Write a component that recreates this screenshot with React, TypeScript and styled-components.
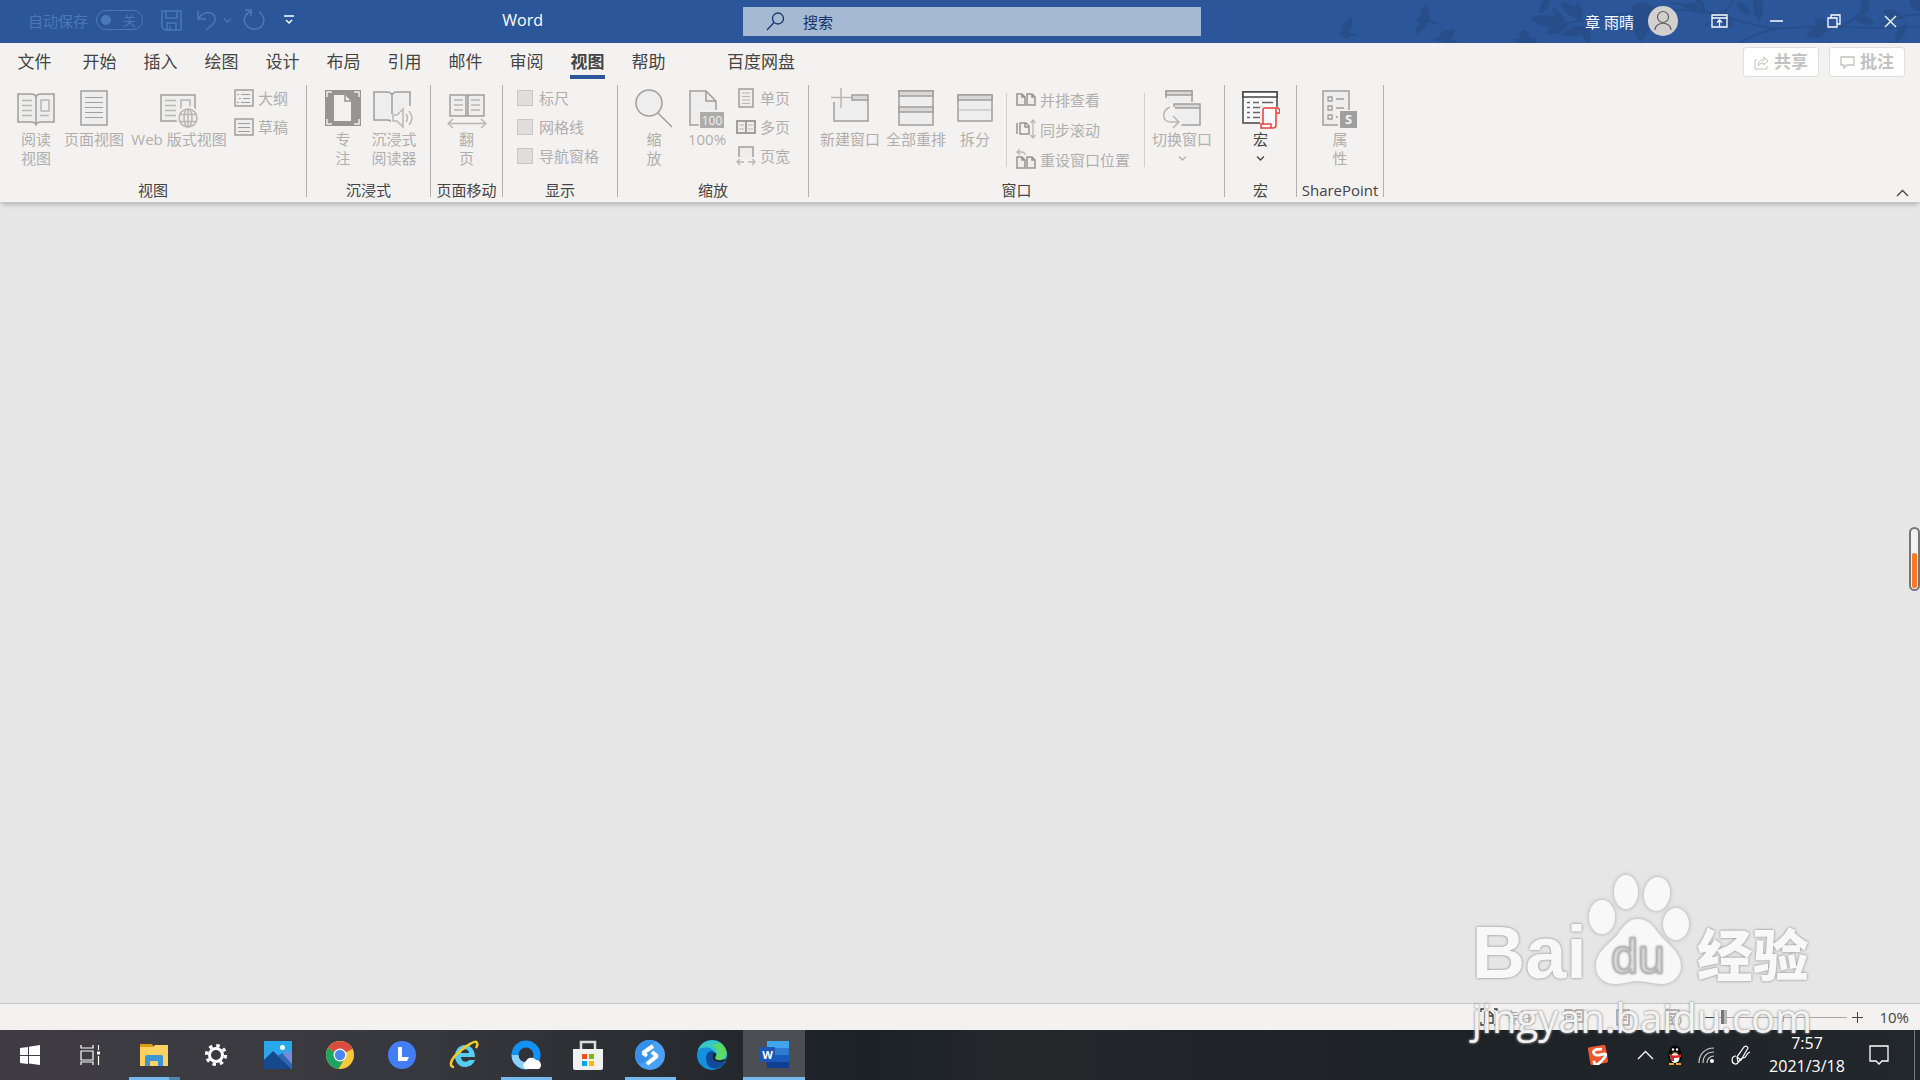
import React from "react";
import styled, { createGlobalStyle } from "styled-components";

const GlobalStyle = createGlobalStyle`
  * { box-sizing: border-box; }
  body { margin: 0; font-family: "Open Sans", "Noto Sans CJK SC", sans-serif; }
  button, input { font: inherit; color: inherit; }
  button { border: 0; padding: 0; background: none; }
`;

const ink = "#444444";
const faded = "#b1aeac";
const brand = "#2b579a";

const Screen = styled.div`
  position: relative;
  min-height: 100vh;
  display: flex;
  flex-direction: column;
  background: #e6e6e6;
  color: ${ink};
  font-size: 15px;
  overflow: hidden;
`;

/* ---------- title bar ---------- */
const TitleBar = styled.header`
  position: relative;
  display: grid;
  grid-template-columns: 743fr 458px 719fr;
  align-items: center;
  height: 43px;
  background: ${brand};
  color: #fff;
`;
const Art = styled.svg`
  position: absolute;
  right: 0;
  top: 0;
`;
const QuickAccess = styled.div`
  display: flex;
  align-items: center;
  align-self: start;
  padding-left: 28px;
  height: 40px;
  color: #4a79b8;
`;
const AutoSave = styled.label`
  display: flex;
  align-items: center;
  gap: 8px;
  margin-right: 18px;
`;
const Toggle = styled.button`
  display: flex;
  align-items: center;
  justify-content: space-between;
  width: 47px;
  height: 20px;
  padding: 0 6px 0 4px;
  border: 1px solid #4a79b8;
  border-radius: 10px;
  font-size: 13px;
  line-height: 16px;
  &::before {
    content: "";
    width: 10px;
    height: 10px;
    border-radius: 50%;
    background: #4a79b8;
  }
`;
const QuickButton = styled.button<{ $gap: number; $bright?: boolean }>`
  display: flex;
  margin-right: ${(p) => p.$gap}px;
  color: ${(p) => (p.$bright ? "#fff" : "inherit")};
`;
const DocTitle = styled.h1`
  margin: 0 200px 0 auto;
  font-size: 16px;
  line-height: 24px;
  font-weight: 400;
  color: #fff;
`;
const Search = styled.label`
  display: flex;
  align-items: center;
  gap: 18px;
  height: 29px;
  padding-left: 23px;
  background: #a6b9d2;
  color: #14356e;
`;
const SearchBox = styled.input`
  flex: 1;
  min-width: 0;
  border: 0;
  padding: 0;
  background: none;
  outline: 0;
  &::placeholder { color: #14356e; opacity: 1; }
`;
const WindowSide = styled.div`
  position: relative;
  display: flex;
  justify-content: flex-end;
  align-items: center;
  align-self: start;
  padding-right: 1px;
`;
const Account = styled.button`
  display: flex;
  align-items: center;
  gap: 14px;
  margin-right: 13px;
`;
const WindowButton = styled.button`
  display: flex;
  justify-content: center;
  align-items: center;
  width: 57px;
  height: 42px;
`;

/* ---------- tabs ---------- */
const TabRow = styled.nav`
  display: flex;
  align-items: flex-start;
  height: 38px;
  padding: 4px 15px 0 17px;
  background: #f3f2f1;
`;
const Tab = styled.button<{ $active?: boolean; $after?: number }>`
  height: 32px;
  margin-right: ${(p) => p.$after ?? 26}px;
  border-bottom: 4px solid ${(p) => (p.$active ? brand : "transparent")};
  font-size: 17px;
  line-height: 30px;
  font-weight: ${(p) => (p.$active ? 700 : 400)};
  width: ${(p) => (p.$after === 0 ? "auto" : "35px")};
  white-space: nowrap;
`;
const TabActions = styled.div`
  display: flex;
  gap: 10px;
  margin-left: auto;
`;
const ActionButton = styled.button`
  display: flex;
  align-items: center;
  justify-content: center;
  gap: 5px;
  width: 76px;
  height: 30px;
  border: 1px solid #e1dfdd;
  border-radius: 3px;
  background: #fff;
  color: #c4c2c0;
  font-size: 17px;
  line-height: 28px;
  font-weight: 700;
`;

/* ---------- ribbon ---------- */
const Ribbon = styled.section`
  position: relative;
  display: flex;
  padding: 4px 0 5px;
  background: #f3f2f1;
  border-bottom: 1px solid #c8c6c4;
  box-shadow: 0 4px 4px -2px rgba(0, 0, 0, 0.2);
`;
const GroupBox = styled.section`
  display: flex;
  flex-direction: column;
  border-right: 1px solid #b3b0ad;
`;
const GroupBody = styled.div<{ $left: number; $right: number }>`
  display: flex;
  align-items: flex-start;
  height: 96px;
  padding: 0 ${(p) => p.$right}px 0 ${(p) => p.$left}px;
`;
const GroupName = styled.h2`
  margin: 0;
  height: 16px;
  font-size: 15px;
  line-height: 18px;
  font-weight: 400;
  text-align: center;
`;
const BigButton = styled.button<{ $w: number; $on?: boolean }>`
  display: flex;
  flex-direction: column;
  align-items: center;
  width: ${(p) => p.$w}px;
  color: ${(p) => (p.$on ? ink : faded)};
  line-height: 19px;
  white-space: nowrap;
`;
const SmallColumn = styled.div<{ $before?: number; $top?: number }>`
  display: flex;
  flex-direction: column;
  margin-top: -2px;
  margin-left: ${(p) => p.$before ?? 0}px;
  padding-top: ${(p) => p.$top ?? 0}px;
`;
const SmallButton = styled.button<{ $h?: number }>`
  display: flex;
  align-items: center;
  gap: 4px;
  height: ${(p) => p.$h ?? 29}px;
  color: ${faded};
  white-space: nowrap;
`;
const CheckRow = styled.label`
  display: flex;
  align-items: center;
  gap: 6px;
  height: 29px;
  color: ${faded};
`;
const Check = styled.input`
  appearance: none;
  width: 16px;
  height: 16px;
  margin: 0;
  border: 1px solid #c8c6c4;
  background: #e1dfdd;
`;
const InnerLine = styled.div<{ $before: number; $after: number }>`
  width: 1px;
  height: 74px;
  margin: 8px ${(p) => p.$after}px 0 ${(p) => p.$before}px;
  background: #d2d0ce;
`;
const Collapse = styled.button`
  display: flex;
  align-self: flex-end;
  margin: 0 11px 0 auto;
`;

const Canvas = styled.main`
  flex: 1;
  display: flex;
  align-items: center;
  justify-content: flex-end;
  padding-bottom: 88px;
`;
const Meter = styled.div`
  display: flex;
  align-items: flex-end;
  width: 11px;
  height: 64px;
  padding: 1px;
  border: 2px solid #767676;
  border-radius: 6px;
  background: #f2f2f2;
`;
const MeterFill = styled.div`
  width: 100%;
  height: 60%;
  border-radius: 2px;
  background: #ff7a22;
`;

/* ---------- status bar ---------- */
const StatusBar = styled.footer`
  display: flex;
  align-items: center;
  justify-content: flex-end;
  height: 27px;
  padding-right: 11px;
  border-top: 1px solid #c6c6c6;
  background: #f3f2f1;
`;
const StatusButton = styled.button<{ $gap: number }>`
  display: flex;
  align-items: center;
  gap: 6px;
  margin-right: ${(p) => p.$gap}px;
  color: #a8a6a4;
  line-height: 20px;
`;
const ZoomSlider = styled.input`
  appearance: none;
  width: 128px;
  height: 16px;
  margin: 0 5px 0 3px;
  background: linear-gradient(#a6a6a6, #a6a6a6) center / 100% 1px no-repeat,
    linear-gradient(#a6a6a6, #a6a6a6) center / 1px 9px no-repeat;
  &::-webkit-slider-thumb {
    appearance: none;
    width: 6px;
    height: 14px;
    background: linear-gradient(90deg, #777 50%, #b5b5b5 50%);
  }
`;
const Percent = styled.output`
  margin-left: 16px;
  line-height: 20px;
`;

/* ---------- task bar ---------- */
const TaskBar = styled.footer`
  display: flex;
  height: 50px;
  background: linear-gradient(90deg, #3f3d43 0%, #37383d 22%, #272b2f 36%, #1b2127 45%, #24282b 52%, #1d2226 75%, #22272b 100%);
  color: #fff;
`;
const TaskButton = styled.button<{ $w?: number; $active?: boolean; $running?: boolean; $stack?: boolean }>`
  position: relative;
  display: flex;
  align-items: center;
  justify-content: center;
  width: ${(p) => p.$w ?? 62}px;
  background: ${(p) => (p.$active ? "#4b4f53" : "none")};
  &::after {
    content: "";
    display: ${(p) => (p.$running || p.$active ? "block" : "none")};
    position: absolute;
    bottom: 0;
    left: ${(p) => (p.$active ? 0 : 6)}px;
    right: ${(p) => (p.$active ? 0 : 5)}px;
    height: 3px;
    background: ${(p) => (p.$stack ? "linear-gradient(90deg, #76b9ed 78%, #5285ae 78%)" : "#76b9ed")};
  }
`;
const Spacer = styled.div<{ $w: number }>`
  width: ${(p) => p.$w}px;
`;
const Tray = styled.div`
  display: flex;
  align-items: center;
  margin-left: auto;
`;
const TrayButton = styled.button<{ $w: number }>`
  display: flex;
  justify-content: center;
  width: ${(p) => p.$w}px;
`;
const Clock = styled.time`
  width: 96px;
  font-size: 16px;
  line-height: 23px;
  text-align: center;
`;
const Desktop = styled.button`
  align-self: stretch;
  width: 6px;
  border-left: 1px solid #777a7c;
`;

/* ---------- watermark ---------- */
const Mark = styled.div`
  position: absolute;
  right: 108px;
  bottom: 34px;
  color: #f8f8f8;
  text-shadow: 0 0 3px #999, 0 0 2px #aaa;
  pointer-events: none;
`;
const MarkRow = styled.div`
  display: flex;
  align-items: flex-end;
  font-family: "Liberation Sans", "Noto Sans CJK SC", sans-serif;
  font-weight: 700;
  font-size: 74px;
  line-height: 74px;
`;
const MarkPaw = styled.svg`
  margin: 0 6px 5px 0;
  filter: drop-shadow(0 0 2px #aaa);
`;
const MarkHan = styled.span`
  font-family: "Noto Sans CJK SC", sans-serif;
  font-weight: 900;
  font-size: 56px;
  line-height: 76px;
`;
const MarkUrl = styled.div`
  font-size: 40px;
  line-height: 56px;
  color: rgba(255, 255, 255, 0.9);
  white-space: nowrap;
`;

/* ---------- drawings ---------- */
type Kids = { w: number; h?: number; children: React.ReactNode };
const Pic = ({ w, h = 45, children }: Kids) => (
  <svg width={w} height={h} viewBox={`0 0 ${w} ${h}`} fill="none" aria-hidden="true">
    {children}
  </svg>
);
const dark = "#a19f9d";
const lite = "#b9b7b5";
const paper = "#eeeeee";

const Chevron = () => (
  <Pic w={9} h={19}><path d="M1 7.5l3.5 3.5L8 7.5" stroke="currentColor" strokeWidth="1.3" /></Pic>
);
const ReadIcon = () => (
  <Pic w={38}>
    <path d="M1 9h13q4 0 5 2.500q1-2.500 5-2.500h13v28H24q-4 0-5 2.500q-1-2.500-5-2.500H1z" fill={paper} stroke={dark} strokeWidth="1.500" />
    <path d="M19 11v27" stroke={dark} strokeWidth="1.500" />
    <path d="M5 15.500h10M5 20.500h10M5 25.500h10M5 30.500h10M23 30.500h9" stroke={lite} strokeWidth="1.500" />
    <path d="M24 15h8v11h-8z" stroke={lite} strokeWidth="1.500" />
  </Pic>
);
const PageIcon = () => (
  <Pic w={28}>
    <path d="M1 6h26v34H1z" fill={paper} stroke={dark} strokeWidth="1.500" />
    <path d="M5 12.500h18M5 17.500h18M5 22.500h18M5 27.500h18M5 32.500h18" stroke={dark} />
  </Pic>
);
const Globe = () => (
  <g stroke={lite} strokeWidth="1.500">
    <circle cx="28" cy="33" r="11" fill="#f3f2f1" stroke="#f3f2f1" />
    <circle cx="28" cy="33" r="9" fill={paper} />
    <ellipse cx="28" cy="33" rx="4" ry="9" />
    <path d="M20 29.500h16M20 36.500h16M28 24v18" />
  </g>
);
const WebIcon = () => (
  <Pic w={38}>
    <path d="M1 10h34v26H1z" fill={paper} stroke={dark} strokeWidth="1.500" />
    <path d="M5 15.500h11M5 20.500h11M5 25.500h11M5 30.500h11M21 31V15h9v16" stroke={lite} strokeWidth="1.500" />
    <Globe />
  </Pic>
);
const OutlineIcon = ({ plain }: { plain?: boolean }) => (
  <Pic w={20} h={18}>
    <path d="M1 1h18v16H1z" fill={paper} stroke={dark} strokeWidth="1.500" />
    <path d={plain ? "M4 5.500h12M4 9.500h12M4 13.500h12" : "M3 5.500h2M7 5.500h9M5 9.500h2M9 9.500h7M3 13.500h2M7 13.500h9"} stroke={dark} />
  </Pic>
);
const FocusIcon = () => (
  <Pic w={36}>
    <path d="M0 5h36v36H0z" fill="#979593" />
    <path d="M2 12V7h5M29 7h5v5M34 34v5h-5M7 39H2v-5" stroke="#eee" strokeWidth="1.500" />
    <path d="M9 10h11l6 6v20H9z" fill="#f3f2f1" />
    <path d="M20 10v6h6" stroke="#979593" strokeWidth="1.500" />
  </Pic>
);
const ImmersiveIcon = () => (
  <Pic w={42}>
    <path d="M19 10q-1-3-5-3H1v28h13q4 0 5 2.500" fill={paper} stroke={dark} strokeWidth="1.500" />
    <path d="M19 10q1-3 5-3h13v28H24q-4 0-5 2.500z" fill={paper} />
    <path d="M19 36V10q1-3 5-3h13v17" stroke={dark} strokeWidth="1.500" />
    <path d="M18 29h5l8-8h11v24H29l-6-5h-5z" fill="#f3f2f1" />
    <path d="M20 30h4l6-6v18l-6-6h-4zM33 29q3 4 0 8M36 26q6 7 0 14" stroke={lite} strokeWidth="1.500" />
  </Pic>
);
const FlipIcon = () => (
  <Pic w={40}>
    <path d="M3 10h34v21H3zM19 10v21M21 10v21" fill={paper} stroke={dark} strokeWidth="1.500" />
    <path d="M7 15h9M7 20h9M7 25h9M24 15h9M24 20h9M24 25h9M1 38.500h38M6 34l-5 4.500L6 43M34 34l5 4.500L34 43" stroke={lite} strokeWidth="1.500" />
  </Pic>
);
const ZoomIcon = () => (
  <Pic w={38}>
    <circle cx="14" cy="18" r="13" fill={paper} stroke={dark} strokeWidth="1.500" />
    <path d="M23 28l14 14" stroke={dark} strokeWidth="1.500" />
  </Pic>
);
const HundredIcon = () => (
  <Pic w={36}>
    <path d="M1 6h16l10 10v24H1z" fill={paper} stroke={dark} strokeWidth="1.500" />
    <path d="M17 6v10h10" stroke={dark} strokeWidth="1.500" />
    <path d="M10 25h26v20H10z" fill="#f3f2f1" />
    <path d="M11 27h24v16H11z" fill="#aeacaa" />
    <text x="23" y="40" textAnchor="middle" fontSize="12" fill="#f3f2f1">100</text>
  </Pic>
);
const OnePageIcon = () => (
  <Pic w={20} h={20}>
    <path d="M3 1h14v18H3z" fill={paper} stroke={dark} strokeWidth="1.500" />
    <path d="M6 5h8M6 8.500h8M6 12h8M6 15.500h8" stroke={lite} />
  </Pic>
);
const ManyPagesIcon = () => (
  <Pic w={20} h={16}>
    <path d="M1 2h18v12H1zM10 2v12" fill={paper} stroke={dark} strokeWidth="2" />
    <path d="M3 6h5M3 10h5M12 6h5M12 10h5" stroke={lite} />
  </Pic>
);
const PageWidthIcon = () => (
  <Pic w={20} h={20}>
    <path d="M3 11V1h14v10" fill={paper} stroke={dark} strokeWidth="1.500" />
    <path d="M1 16h7M12 16h7M4 13l-3 3 3 3M16 13l3 3-3 3" stroke={lite} strokeWidth="1.300" />
  </Pic>
);
const NewWindowIcon = () => (
  <Pic w={38}>
    <path d="M3 15h34v21H3z" fill={paper} />
    <path d="M21 10h16v5H21z" fill="#dad8d6" stroke={dark} strokeWidth="1.500" />
    <path d="M3 17v19h34V15" stroke={dark} strokeWidth="1.500" />
    <path d="M0 12.500h20M10 3v20" stroke={lite} strokeWidth="1.500" />
  </Pic>
);
const ArrangeIcon = () => (
  <Pic w={36}>
    <path d="M1 6h34v34H1z" fill={paper} stroke={dark} strokeWidth="1.500" />
    <path d="M1 6h34v5H1zM1 22h34v5H1z" fill="#dad8d6" stroke={dark} strokeWidth="1.500" />
  </Pic>
);
const SplitIcon = () => (
  <Pic w={36}>
    <path d="M1 10h34v26H1z" fill={paper} stroke={dark} strokeWidth="1.500" />
    <path d="M1 10h34v5H1z" fill="#dad8d6" stroke={dark} strokeWidth="1.500" />
    <path d="M1 25h34" stroke={lite} />
  </Pic>
);
const twoSheets = "M1 1h5l3 3v8H1zM6 1v3h3M11 1h5l3 3v8h-8zM16 1v3h3";
const SideIcon = () => (
  <Pic w={20} h={13}><path d={twoSheets} fill={paper} stroke="#979593" strokeWidth="1.500" /></Pic>
);
const SyncIcon = () => (
  <Pic w={20} h={20}>
    <path d="M1 4v11M4 4h6l3 3v8H4zM9 4v4h4" stroke="#979593" strokeWidth="1.500" />
    <path d="M17 1v18M14.500 4L17 1l2.500 3M14.500 16l2.500 3 2.500-3" stroke={lite} strokeWidth="1.300" />
  </Pic>
);
const ResetIcon = () => (
  <Pic w={20} h={20}>
    <g transform="translate(0 7)"><path d={twoSheets} fill={paper} stroke="#979593" strokeWidth="1.500" /></g>
    <path d="M9 6q0-3-4-3H1M4 0L1 3l3 3" stroke={lite} strokeWidth="1.300" />
  </Pic>
);
const SwitchIcon = () => (
  <Pic w={38}>
    <path d="M3 6h26v14H3z" fill={paper} />
    <path d="M3 13V6h26v11" stroke={dark} strokeWidth="1.500" />
    <path d="M3 6h26v4H3z" fill="#dad8d6" stroke={dark} strokeWidth="1.500" />
    <path d="M9 17h29v24H9z" fill="#f3f2f1" />
    <path d="M11 24h26v16H11z" fill={paper} />
    <path d="M11 19h26v4H11z" fill="#dad8d6" stroke={dark} strokeWidth="1.500" />
    <path d="M37 23v17H18" stroke={dark} strokeWidth="1.500" />
    <path d="M5 22h7v12h7v6H8z" fill="#f3f2f1" />
    <path d="M7 22C-2 26-1 37 8 37h7M10 31l6 6-6 6" stroke={lite} strokeWidth="1.500" />
  </Pic>
);
const MacroIcon = () => (
  <Pic w={38}>
    <path d="M1 7h34v31H1z" fill="#fafafa" stroke="#444" strokeWidth="1.500" />
    <path d="M1 7h34v5H1z" fill="#fff" stroke="#444" strokeWidth="1.500" />
    <path d="M5 17.500h3M11 17.500h6M20 17.500h11M5 22.500h3M11 22.500h10M5 27.500h3M11 27.500h8M5 32.500h3M11 32.500h8" stroke="#666" strokeWidth="1.300" />
    <path d="M18 37V22h20v22H18z" fill="#f3f2f1" />
    <path d="M21 39V25q0-2 2-2h12q3 0 3 5h-4v12q0 3-3 3H19v-4h10v4M34 28v-5" fill="#fafafa" stroke="#e8403c" strokeWidth="1.500" />
  </Pic>
);
const PropertiesIcon = () => (
  <Pic w={36}>
    <path d="M1 6h26v34H1z" fill={paper} stroke={dark} strokeWidth="1.500" />
    <path d="M6 12h4v4H6zM6 21h4v4H6zM6 30h4v4H6zM14 14h8M14 23h8M14 32h3" stroke={dark} strokeWidth="1.300" />
    <path d="M16 25h20v19H16z" fill="#f3f2f1" />
    <path d="M18 26h17v17H18z" fill="#a19f9d" />
    <text x="26.500" y="39" textAnchor="middle" fontSize="13" fontWeight="700" fill="#f3f2f1">S</text>
  </Pic>
);

const TitleArt = () => (
  <Art width="600" height="43" viewBox="0 0 600 43" fill="#274e88" aria-hidden="true">
    <path d="M32 17q-11 6-11 15l-5 1 6 2q0 4 6 4l2-3h7l-1-2-7-1q5-9 3-16z" />
    <path d="M105 4q-6 8-5 14l-6 1 5 5q-5 6-4 10 9-1 13-12l8 3 4-3-10-2q1-10-5-16z" />
    <path d="M135 29q-13 0-16 8l-6 3q12 3 26 3l-3-3-6-1q5-4 5-10zM203 30q-6 3-3 8l-6 1 3 4h20v-5l-8-1q1-6-6-7z" />
    <g stroke="#274e88" fill="none" strokeWidth="2">
      <path d="M240 24c40-6 70-14 120-14s70 22 110 18 70 2 130-1M230 0l-7 8M385 26q20-10 28-26M350 3q40 2 50 22M470 28q-28 0-50 15M520 27q20-10 30-27M560 25q20-10 40-11" />
    </g>
    <path d="M210 18q18-8 35 6-22 8-35-6zM232 7q12 6 14 19-14-6-14-19zM257 1q10 12 2 20-9-7-2-20zM225 34q10-12 24-10-8 12-24 10zM240 35q14-14 32-6-13 11-32 6zM267 29q8 8 0 15-8-9 0-15zM224 0q-6 6-4 14 11-5 9-14zM240 3q15-2 21 16-14-1-21-16z" />
    <path d="M312 6q12-8 24 2 0 14-15 34-12-14-9-36zM362 5q12-6 23 6-13 4-23-6zM376 0q-2 10 7 14 5-8-2-14zM400 10q14 2 12 19-13-6-12-19zM417 1q14 4 12 14-12-2-12-14zM434 0q-4 10 5 22 6-8 3-22zM495 19q12-4 12 10-12 0-12-10zM486 36q7-13 22-8-4 14-22 8zM533 18q12-8 22 6-12 4-22-6zM548 0q4 12-5 15-5-8 0-15zM562 11q14-6 22 8-14 2-22-8zM575 43q-2-14 12-20 0 15-12 20zM590 0q-2 8 10 12V0z" />
  </Art>
);

const Du = () => (
  <MarkPaw width="104" height="112" viewBox="0 0 104 112" fill="#f8f8f8">
    <ellipse cx="15" cy="44" rx="13" ry="17" />
    <ellipse cx="39" cy="19" rx="12" ry="17" />
    <ellipse cx="70" cy="21" rx="13" ry="17" transform="rotate(8 70 21)" />
    <ellipse cx="89" cy="51" rx="13" ry="16" />
    <path d="M51 46c-10 0-15 8-20 15-7 9-22 17-22 32 0 12 9 18 20 18 8 0 14-3 22-3s15 3 23 3c12 0 20-8 20-18 0-14-14-22-22-32-6-8-11-15-21-15z" />
    <text x="51" y="100" textAnchor="middle" fontSize="48" fontWeight="400" fontFamily="Liberation Sans" fill="#ececec" stroke="#b8b8b8" strokeWidth="1">du</text>
  </MarkPaw>
);

const WordGlyph = () => (
  <Pic w={30} h={30}>
    <path d="M8 1h22v7H8z" fill="#41a5ee" /><path d="M8 8h22v7H8z" fill="#2b7cd3" />
    <path d="M8 15h22v7H8z" fill="#185abd" /><path d="M8 22h22v6H8z" fill="#103f91" />
    <rect x="1" y="7" width="15" height="15" rx="1" fill="#1b55b5" />
    <text x="8.500" y="19" textAnchor="middle" fontSize="11" fontWeight="700" fill="#fff">W</text>
  </Pic>
);

const Group = ({ name, left = 0, right = 0, children }: { name: string; left?: number; right?: number; children: React.ReactNode }) => (
  <GroupBox aria-label={name}>
    <GroupBody $left={left} $right={right}>{children}</GroupBody>
    <GroupName>{name}</GroupName>
  </GroupBox>
);
const Big = ({ w, icon, lines, on, menu }: { w: number; icon: React.ReactNode; lines: string[]; on?: boolean; menu?: boolean }) => (
  <BigButton $w={w} $on={on} disabled={!on}>
    {icon}
    {lines.map((l) => <span key={l}>{l}</span>)}
    {menu && <Chevron />}
  </BigButton>
);
const Small = ({ icon, text, h }: { icon: React.ReactNode; text: string; h?: number }) => (
  <SmallButton $h={h} disabled>{icon}<span>{text}</span></SmallButton>
);

const tabs = ["文件", "开始", "插入", "绘图", "设计", "布局", "引用", "邮件", "审阅", "视图", "帮助"];

export default function App() {
  return (
    <Screen>
      <GlobalStyle />
      <TitleBar>
        <TitleArt />
        <QuickAccess>
          <AutoSave>自动保存<Toggle role="switch" aria-checked="false" disabled>关</Toggle></AutoSave>
          <QuickButton $gap={15} disabled aria-label="保存">
            <Pic w={21} h={21}><path d="M1 1h19v19H4l-3-3zM5 1v7h11V1M6 20v-7h9v7M9 20v-4" stroke="currentColor" strokeWidth="1.500" /></Pic>
          </QuickButton>
          <QuickButton $gap={6} disabled aria-label="撤消">
            <Pic w={20} h={21}><path d="M1 1v8h8M1 9C6 2 12 1 16 4c4 4 2 8-1 11l-6 5" stroke="currentColor" strokeWidth="1.500" /></Pic>
          </QuickButton>
          <QuickButton $gap={11} disabled aria-label="撤消选项"><Chevron /></QuickButton>
          <QuickButton $gap={19} disabled aria-label="重复">
            <Pic w={22} h={22}><path d="M2 1h6v6M8 2C2 5 0 10 2 14c3 7 14 9 18 1 2-5 0-10-4-12" stroke="currentColor" strokeWidth="1.500" /></Pic>
          </QuickButton>
          <QuickButton $gap={0} $bright aria-label="自定义快速访问工具栏">
            <Pic w={10} h={10}><path d="M0 1h10M2 5l3 3 3-3" stroke="currentColor" strokeWidth="1.500" /></Pic>
          </QuickButton>
          <DocTitle>Word</DocTitle>
        </QuickAccess>
        <Search>
          <Pic w={19} h={19}><circle cx="12" cy="6.500" r="5.500" stroke="currentColor" strokeWidth="1.300" /><path d="M8 10.500l-7 7.500" stroke="currentColor" strokeWidth="1.300" /></Pic>
          <SearchBox placeholder="搜索" aria-label="搜索" />
        </Search>
        <WindowSide>
          <Account>
            章 雨晴
            <Pic w={30} h={30}>
              <circle cx="15" cy="15" r="15" fill="#d2d0ce" />
              <circle cx="15" cy="11" r="5.500" stroke="#605e5c" strokeWidth="1.200" />
              <path d="M7 24c0-9 16-9 16 0" stroke="#605e5c" strokeWidth="1.200" />
            </Pic>
          </Account>
          <WindowButton aria-label="功能区显示选项"><Pic w={17} h={14}><path d="M1 1h15v12H1zM1 4h15M8.500 12V6M6 8.500L8.500 6 11 8.500" stroke="#fff" strokeWidth="1.300" /></Pic></WindowButton>
          <WindowButton aria-label="最小化"><Pic w={13} h={2}><path d="M0 1h13" stroke="#fff" strokeWidth="1.500" /></Pic></WindowButton>
          <WindowButton aria-label="还原"><Pic w={14} h={14}><path d="M1 4h9v9H1zM4 4V1h9v9h-3" stroke="#fff" strokeWidth="1.300" /></Pic></WindowButton>
          <WindowButton aria-label="关闭"><Pic w={13} h={13}><path d="M1 1l11 11M12 1L1 12" stroke="#fff" strokeWidth="1.300" /></Pic></WindowButton>
        </WindowSide>
      </TitleBar>

      <TabRow>
        {tabs.map((t, i) => <Tab key={t} $active={t === "视图"} $after={i === 0 ? 30 : i === 10 ? 61 : 26}>{t}</Tab>)}
        <Tab $after={0}>百度网盘</Tab>
        <TabActions>
          <ActionButton disabled>
            <Pic w={15} h={15}><path d="M3 5H1v9h12v-3M4 11c0-5 3-6 6-6V2l4 4-4 4V8C7 8 5 9 4 11z" stroke="currentColor" /></Pic>共享
          </ActionButton>
          <ActionButton disabled>
            <Pic w={15} h={15}><path d="M1 2h13v8H7l-3 3v-3H1z" stroke="currentColor" strokeWidth="1.300" /></Pic>批注
          </ActionButton>
        </TabActions>
      </TabRow>

      <Ribbon>
        <Group name="视图" left={12} right={18}>
          <Big w={48} icon={<ReadIcon />} lines={["阅读", "视图"]} />
          <Big w={68} icon={<PageIcon />} lines={["页面视图"]} />
          <Big w={102} icon={<WebIcon />} lines={["Web 版式视图"]} />
          <SmallColumn $before={4}>
            <Small icon={<OutlineIcon />} text="大纲" />
            <Small icon={<OutlineIcon plain />} text="草稿" />
          </SmallColumn>
        </Group>
        <Group name="沉浸式" left={15} right={6}>
          <Big w={42} icon={<FocusIcon />} lines={["专", "注"]} />
          <Big w={60} icon={<ImmersiveIcon />} lines={["沉浸式", "阅读器"]} />
        </Group>
        <Group name="页面移动">
          <Big w={71} icon={<FlipIcon />} lines={["翻", "页"]} />
        </Group>
        <Group name="显示" left={14} right={18}>
          <SmallColumn>
            {["标尺", "网格线", "导航窗格"].map((t) => <CheckRow key={t}><Check type="checkbox" disabled />{t}</CheckRow>)}
          </SmallColumn>
        </Group>
        <Group name="缩放" left={9} right={18}>
          <Big w={54} icon={<ZoomIcon />} lines={["缩", "放"]} />
          <Big w={52} icon={<HundredIcon />} lines={["100%"]} />
          <SmallColumn $before={3}>
            <Small icon={<OnePageIcon />} text="单页" />
            <Small icon={<ManyPagesIcon />} text="多页" />
            <Small icon={<PageWidthIcon />} text="页宽" />
          </SmallColumn>
        </Group>
        <Group name="窗口" left={8} right={9}>
          <Big w={66} icon={<NewWindowIcon />} lines={["新建窗口"]} />
          <Big w={66} icon={<ArrangeIcon />} lines={["全部重排"]} />
          <Big w={52} icon={<SplitIcon />} lines={["拆分"]} />
          <InnerLine $before={5} $after={9} />
          <SmallColumn $top={1}>
            <Small h={30} icon={<SideIcon />} text="并排查看" />
            <Small h={30} icon={<SyncIcon />} text="同步滚动" />
            <Small h={30} icon={<ResetIcon />} text="重设窗口位置" />
          </SmallColumn>
          <InnerLine $before={14} $after={4} />
          <Big w={66} icon={<SwitchIcon />} lines={["切换窗口"]} menu />
        </Group>
        <Group name="宏">
          <Big w={71} icon={<MacroIcon />} lines={["宏"]} on menu />
        </Group>
        <Group name="SharePoint">
          <Big w={86} icon={<PropertiesIcon />} lines={["属", "性"]} />
        </Group>
        <Collapse aria-label="折叠功能区"><Pic w={13} h={8}><path d="M1 7l5.500-5.500L12 7" stroke={ink} strokeWidth="1.300" /></Pic></Collapse>
      </Ribbon>

      <Canvas><Meter><MeterFill /></Meter></Canvas>

      <StatusBar>
        <StatusButton $gap={30}>
          <Pic w={18} h={18}><path d="M1 4V1h3M14 1h3v3M17 14v3h-3M4 17H1v-3M5 4h5l3 3v8H5zM9 4v4h4" stroke="#333" strokeWidth="1.300" /></Pic>专注
        </StatusButton>
        <StatusButton $gap={32} aria-label="阅读视图"><Pic w={20} h={16}><path d="M1 1h7l2 2 2-2h7v12h-7l-2 2-2-2H1zM10 3v11M3 5h4M3 8h4M13 5h4M13 8h4" stroke={dark} strokeWidth="1.300" /></Pic></StatusButton>
        <StatusButton $gap={35} aria-label="页面视图"><Pic w={14} h={17}><path d="M1 1h12v15H1zM3 5h8M3 8h8M3 11h8" stroke={dark} strokeWidth="1.500" /></Pic></StatusButton>
        <StatusButton $gap={23} aria-label="Web 版式视图"><Pic w={17} h={17}><path d="M8 15H1V1h13v6M3 5h8M3 8h4M3 11h4" stroke={dark} strokeWidth="1.300" /><circle cx="11.500" cy="11.500" r="4.500" stroke={dark} strokeWidth="1.300" /></Pic></StatusButton>
        <StatusButton $gap={0} aria-label="缩小"><Pic w={11} h={11}><path d="M0 5.500h11" stroke={ink} /></Pic></StatusButton>
        <ZoomSlider type="range" min="0" max="190" defaultValue="3" aria-label="缩放级别" />
        <StatusButton $gap={0} aria-label="放大"><Pic w={11} h={11}><path d="M0 5.500h11M5.500 0v11" stroke={ink} /></Pic></StatusButton>
        <Percent>10%</Percent>
      </StatusBar>

      <TaskBar>
        <TaskButton $w={60} aria-label="开始"><Pic w={20} h={20}><path d="M0 3l8-1v8H0zM9 1.800L20 0v10H9zM0 11h8v8l-8-1zM9 11h11v9L9 18.500z" fill="#fff" /></Pic></TaskButton>
        <TaskButton $w={60} aria-label="任务视图"><Pic w={20} h={20}><path d="M1 0v3h12V0M1 6h12v9H1zM1 20v-3h12v3M18.500 0v5M18.500 11v9" stroke="#fff" strokeWidth="1.200" /><path d="M17 6.500h3v3h-3z" fill="#fff" /></Pic></TaskButton>
        <Spacer $w={3} />
        <TaskButton $running $stack aria-label="文件资源管理器"><Pic w={28} h={24}><path d="M0 1h12l2 3H0z" fill="#e09b10" /><path d="M0 4h13l2-2h13v21H0z" fill="#fdd162" /><path d="M5 23v-9q0-2 2-2h14q2 0 2 2v9h-5v-5h-8v5z" fill="#3b94d4" /></Pic></TaskButton>
        <TaskButton aria-label="设置"><Pic w={24} h={24}><circle cx="12" cy="12" r="6.500" stroke="#fff" strokeWidth="3" /><circle cx="12" cy="12" r="9.500" stroke="#fff" strokeWidth="3.200" strokeDasharray="3.460 4" /></Pic></TaskButton>
        <TaskButton aria-label="照片"><Pic w={28} h={28}><path d="M0 0h28v28H0z" fill="#29a9e9" /><path d="M17 16l6-7 5 5v14H17z" fill="#7a8ad8" /><path d="M0 19l9-9 19 18H0z" fill="#15488c" /><path d="M14 15l4-3 10 11v5z" fill="#2f65b3" /><circle cx="18.500" cy="6.500" r="2.500" fill="#fff" /></Pic></TaskButton>
        <TaskButton aria-label="Chrome"><Pic w={28} h={28}><circle cx="14" cy="14" r="14" fill="#fbc93c" /><path d="M14 14L2 7a14 14 0 0124.500 1z" fill="#dd4b3e" /><path d="M14 14L2 7a14 14 0 0010.500 21l6-10.500z" fill="#1ea362" /><circle cx="14" cy="14" r="6.500" fill="#fff" /><circle cx="14" cy="14" r="5.200" fill="#4a86f0" /></Pic></TaskButton>
        <TaskButton aria-label="联想"><Pic w={28} h={28}><circle cx="14" cy="14" r="14" fill="#437ef6" /><path d="M10 6h4v10h7l-2 4h-9z" fill="#fff" /></Pic></TaskButton>
        <TaskButton aria-label="Internet Explorer"><Pic w={30} h={30}><path d="M26 20c-2 5-6 7-10 7-6 0-10-5-10-11S10 5 16 5s10 5 10 12H12c0 5 6 6 8 3z" fill="#55ccf4" /><path d="M12 13h8c0-5-8-5-8 0z" fill="#34363b" /><path d="M5 27c-5 0-4-7 4-14S27-1 28 3c1 2 0 3-1 5" stroke="#f8ca2c" strokeWidth="2.500" /></Pic></TaskButton>
        <TaskButton $running aria-label="QQ浏览器"><Pic w={30} h={30}><circle cx="15" cy="15" r="11" stroke="#1292f5" strokeWidth="7" /><path d="M4 15a11 11 0 0015 10" stroke="#8dd0fa" strokeWidth="7" /><path d="M14 29a5 5 0 011-8 6 6 0 0110-1 5 5 0 013 9z" fill="#fff" /></Pic></TaskButton>
        <TaskButton aria-label="Microsoft Store"><Pic w={30} h={30}><path d="M8 9V2h14v7" stroke="#ddd" strokeWidth="2.500" /><path d="M0 9h30v19q0 2-2 2H2q-2 0-2-2z" fill="#f1f1f1" /><path d="M9 14h5v5H9z" fill="#f04e1f" /><path d="M16 14h5v5h-5z" fill="#7fba00" /><path d="M9 21h5v5H9z" fill="#00a4ef" /><path d="M16 21h5v5h-5z" fill="#ffb900" /></Pic></TaskButton>
        <TaskButton $running aria-label="搜狗浏览器"><Pic w={30} h={30}><circle cx="15" cy="15" r="15" fill="#48a1f6" /><path d="M12 0a15 15 0 00-9 24q10-2 12-9Q12 8 20 1z" fill="#3690ea" /><path d="M18 6L8 13l4 3M12 24l10-8-5-4" stroke="#fff" strokeWidth="4" strokeLinejoin="bevel" /></Pic></TaskButton>
        <TaskButton aria-label="Edge"><Pic w={30} h={30}><circle cx="15" cy="15" r="15" fill="#1590dc" /><path d="M1 10C5-2 24-4 29 10c3 8-4 12-10 10-4-2 0-4-1-7-2-6-12-7-17-3z" fill="#38c8c4" /><path d="M23 3c8 5 9 15 1 17-5 1-7-1-5-4 3-5 0-9-4-11z" fill="#5bd96a" /><path d="M9 18c0-5 4-8 8-6-3 3-1 9 4 10q4 1 7-1c-4 10-19 11-19-3z" fill="#104a9c" /><path d="M17 12c-3 3-2 9 4 10q4 1 7-1l2-2-6 1c-5 1-7-2-5-4 1-2 0-3-2-4z" fill="#23272b" /></Pic></TaskButton>
        <TaskButton $active aria-label="Word"><WordGlyph /></TaskButton>
        <Tray>
          <TrayButton $w={62} aria-label="搜狗输入法"><Pic w={20} h={20}><g transform="rotate(-10 10 10)"><rect x="1" y="1" width="18" height="18" rx="2" fill="#f0562b" /><path d="M15 5Q6 3 6 7t8 3-1 6-8-1" stroke="#fff" strokeWidth="2.800" /></g></Pic></TrayButton>
          <TrayButton $w={32} aria-label="显示隐藏的图标"><Pic w={17} h={10}><path d="M1 9l7.500-7.500L16 9" stroke="#fff" strokeWidth="1.300" /></Pic></TrayButton>
          <TrayButton $w={28} aria-label="QQ"><Pic w={16} h={20}><ellipse cx="8" cy="11" rx="7" ry="8" fill="#050505" /><circle cx="8" cy="6" r="5.500" fill="#050505" /><ellipse cx="8" cy="13" rx="4.500" ry="5" fill="#fff" /><circle cx="6" cy="4.500" r="1.200" fill="#fff" /><circle cx="10" cy="4.500" r="1.200" fill="#fff" /><path d="M5 7.500h6l-3 1.500z" fill="#f5a623" /><path d="M2 9q6 3 12 0v3q-4 1-7 1v3H4v-4l-2-1z" fill="#e01f26" /><path d="M2 18h5v2H2zM9 18h5v2H9z" fill="#f5a623" /></Pic></TrayButton>
          <TrayButton $w={34} aria-label="网络"><Pic w={17} h={17}><path d="M1 16C1 7 7 1 16 1M5 16C5 9 9 5 16 5M9 16c0-4 3-7 7-7" stroke="#ccc" strokeWidth="1.200" /><circle cx="14" cy="14" r="2" fill="#fff" /></Pic></TrayButton>
          <TrayButton $w={36} aria-label="Windows Ink 工作区"><Pic w={20} h={20}><path d="M7 17L6 12 13 2q3-2 4 1l-7 12zM6 12l4 3M5 11C0 11 0 18 4 19c5 1 3-6 8-6 4 0 2-4 7-6" stroke="#fff" strokeWidth="1.200" /></Pic></TrayButton>
          <Clock>7:57<br />2021/3/18</Clock>
          <TrayButton $w={48} aria-label="操作中心"><Pic w={20} h={20}><path d="M1 1h18v15h-6l-3 3-3-3H1z" stroke="#fff" strokeWidth="1.300" /></Pic></TrayButton>
          <Spacer $w={11} />
          <Desktop aria-label="显示桌面" />
        </Tray>
      </TaskBar>

      <Mark>
        <MarkRow><span>Bai</span><Du /><MarkHan>经验</MarkHan></MarkRow>
        <MarkUrl>jingyan.baidu.com</MarkUrl>
      </Mark>
    </Screen>
  );
}
